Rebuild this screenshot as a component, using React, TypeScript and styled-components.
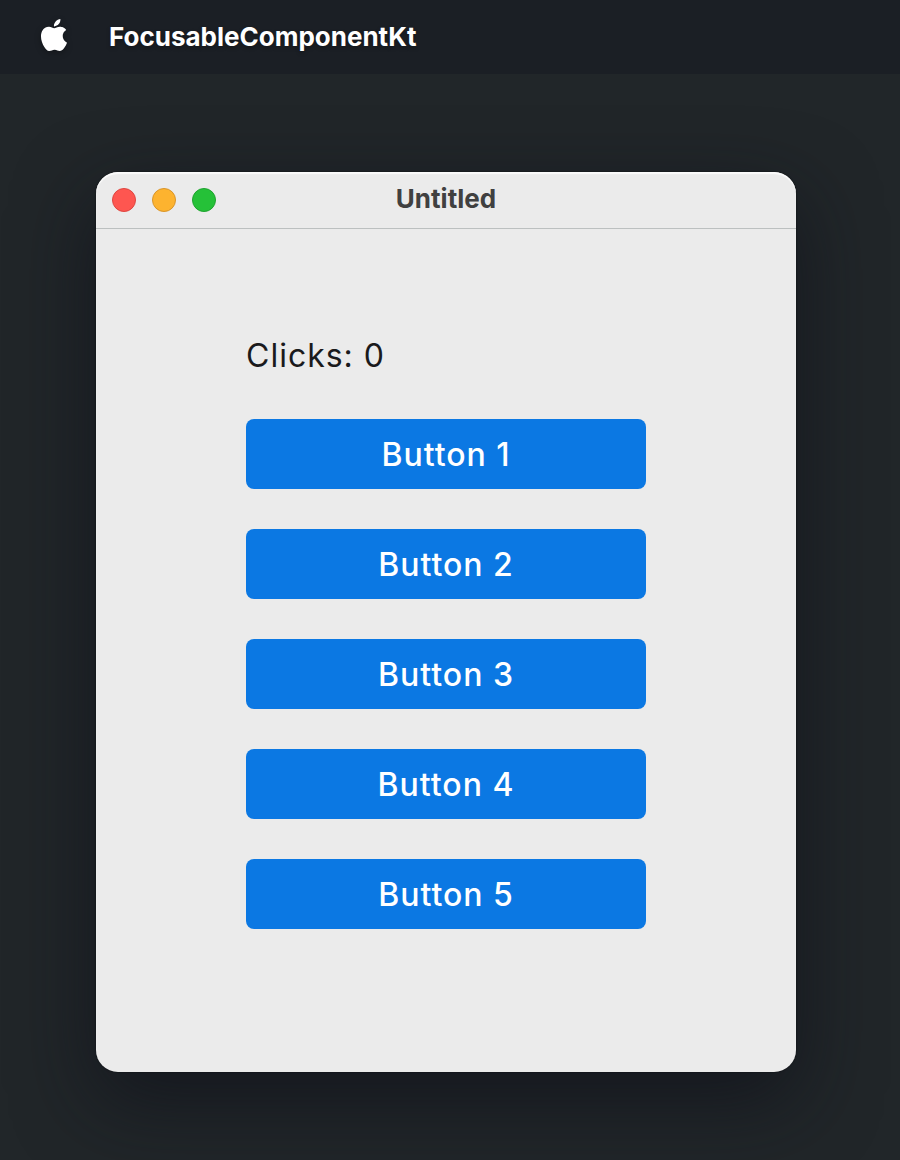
import React, { useState } from "react";
import styled, { createGlobalStyle } from "styled-components";
import { SiApple } from "react-icons/si";

const GlobalStyle = createGlobalStyle`
  * { box-sizing: border-box; }
  body {
    margin: 0;
    background: #212629;
    font-family: Inter, "Liberation Sans", sans-serif;
  }
`;

const Desktop = styled.div`
  min-height: 100vh;
  overflow: hidden;
  background: #212629;
`;

const MenuBar = styled.header`
  display: flex;
  align-items: center;
  gap: 39px;
  height: 74px;
  padding: 0 38px;
  background: #1b1f25;
  color: #ffffff;
`;

const MenuIcon = styled(SiApple)`
  display: block;
  width: 32px;
  height: 32px;
  margin-bottom: 4px;
  filter: drop-shadow(0 2px 3px rgba(0, 0, 0, 0.3));
`;

const MenuTitle = styled.span`
  font-size: 26px;
  line-height: 32px;
  font-weight: 700;
  text-shadow: 0 2px 4px rgba(0, 0, 0, 0.3);
`;

const Window = styled.main`
  margin: 98px 104px 88px 96px;
  border-radius: 22px;
  background: #ebebeb;
  box-shadow: 0 28px 80px rgba(14, 16, 24, 0.65), 0 0 2px rgba(0, 0, 0, 0.7),
    inset 0 2px 1px #fbfbfb;
`;

const TitleBar = styled.div`
  display: grid;
  grid-template-columns: 1fr auto 1fr;
  align-items: center;
  height: 57px;
  padding: 0 16px;
  border-bottom: 1px solid #bcc0c0;
`;

const Lights = styled.div`
  display: flex;
  gap: 16px;
`;

const Light = styled.button<{ $fill: string; $edge: string }>`
  width: 24px;
  height: 24px;
  padding: 0;
  border: 1px solid ${(p) => p.$edge};
  border-radius: 50%;
  background: ${(p) => p.$fill};
`;

const WindowTitle = styled.h1`
  margin: 0;
  padding-bottom: 2px;
  color: #404040;
  font-size: 26px;
  line-height: 32px;
  font-weight: 700;
`;

const Content = styled.div`
  display: flex;
  flex-direction: column;
  gap: 40px;
  max-width: 400px;
  margin: 0 auto;
  padding: 108px 0 143px;
  letter-spacing: 1px;
`;

const Counter = styled.p`
  margin: 0;
  padding-bottom: 4px;
  color: #1a1a1c;
  font-size: 32px;
  line-height: 38px;
`;

const ClickButton = styled.button`
  height: 70px;
  padding: 2px 16px 0;
  border: 0;
  border-radius: 8px;
  background: #0b78e3;
  color: #ffffff;
  font-family: inherit;
  font-size: 32px;
  font-weight: 500;
  line-height: 38px;
  letter-spacing: inherit;
`;

const lights = [
  { label: "Close", fill: "#fe5650", edge: "#de4640" },
  { label: "Minimize", fill: "#fdb32f", edge: "#d9952a" },
  { label: "Zoom", fill: "#25c138", edge: "#1fa32f" },
];

export default function App() {
  const [clicks, setClicks] = useState(0);
  return (
    <Desktop>
      <GlobalStyle />
      <MenuBar>
        <MenuIcon aria-hidden="true" />
        <MenuTitle>FocusableComponentKt</MenuTitle>
      </MenuBar>
      <Window>
        <TitleBar>
          <Lights>
            {lights.map((l) => (
              <Light key={l.label} type="button" aria-label={l.label} $fill={l.fill} $edge={l.edge} />
            ))}
          </Lights>
          <WindowTitle>Untitled</WindowTitle>
        </TitleBar>
        <Content>
          <Counter>Clicks: {clicks}</Counter>
          {[1, 2, 3, 4, 5].map((n) => (
            <ClickButton key={n} type="button" onClick={() => setClicks((c) => c + 1)}>
              Button {n}
            </ClickButton>
          ))}
        </Content>
      </Window>
    </Desktop>
  );
}
